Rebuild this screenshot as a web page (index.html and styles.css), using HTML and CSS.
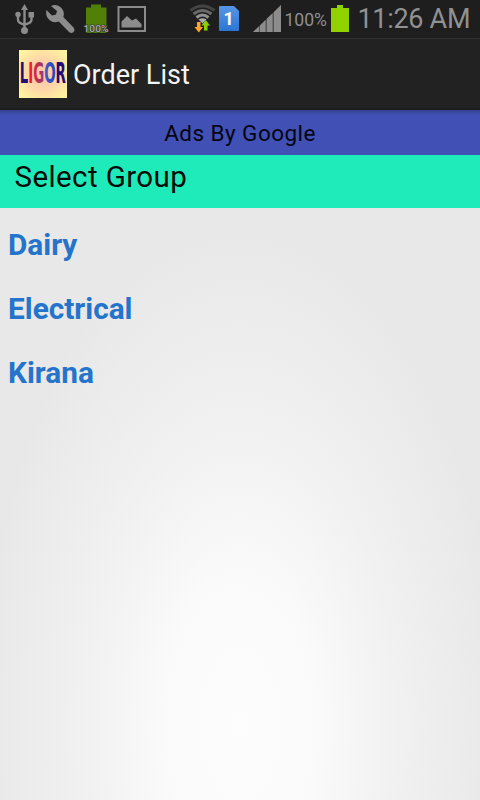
FILE: index.html
```html
<!DOCTYPE html>
<html lang="en">
<head>
<meta charset="utf-8">
<title>Order List</title>
<link rel="stylesheet" href="styles.css">
</head>
<body>
<div class="screen">
  <div class="status">
    <svg class="usb" width="20" height="32" viewBox="15 3 20 32"><g fill="none" stroke="#8c8c8c" stroke-width="2.4"><path d="M24.500 8V31M18 16V20Q18 23 24.500 24.500M31.500 16V20Q31.500 23 24.500 24.500"/></g><g fill="#8c8c8c"><path d="M24.500 4L28 10H21Z"/><circle cx="18" cy="14.500" r="2.700"/><path d="M28.500 12H34V17.500H28.500Z"/><circle cx="24.500" cy="30.500" r="3.500"/></g></svg>
    <svg class="wrench" width="30" height="30" viewBox="45 4 30 30"><path fill="#8c8c8c" d="M51 6Q57 3.500 61.500 8Q65 12 63.300 17L73.500 27.500Q75.500 30 73.500 32Q71.500 34 69 32L58.800 21.500Q53.500 23.500 49.500 20Q45 16 46.500 10L52 15.500L56 14.500L57 11Z"/></svg>
    <svg class="mini-battery" width="28" height="31" viewBox="83 4 28 31"><path fill="#527f08" d="M91 4.500H101V7.500H106.500V33H86V7.500H91Z"/><text x="83.500" y="32" textLength="25" lengthAdjust="spacingAndGlyphs" font-size="9.500" font-weight="500" fill="#aaa" stroke="#333" stroke-width="1.200" paint-order="stroke">100%</text></svg>
    <svg class="picture" width="30" height="28" viewBox="117 5 30 28"><path fill="none" stroke="#8c8c8c" stroke-width="2" d="M118.500 7H145V31H118.500Z"/><path fill="#8c8c8c" d="M121.500 27.500V21.500L127 16L132 20.500L136 18.500L141.500 24V27.500Z"/></svg>
    <svg class="wifi" width="28" height="30" viewBox="189 3 28 30"><g fill="none" stroke-width="3"><path stroke="#444" d="M190.500 10.500Q202.500 1.500 214.500 10.500"/><path stroke="#686868" d="M193.500 14Q202.500 7 211.500 14"/><path stroke="#929292" d="M196.500 17.500Q202.500 12.500 208.500 17.500"/></g><path fill="#aaa" d="M198.500 19.500Q202.500 17 206.500 19.500L202.500 23.500Z"/><path fill="#ffa32b" d="M197 22H200.500V27H203L198.800 32.500L194.500 27H197Z"/><path fill="#8bd000" d="M204 30.500V25.500H201.500L205.700 20L210 25.500H207.500V30.500Z"/></svg>
    <svg class="sim" width="21" height="26" viewBox="219 6 21 26"><defs><linearGradient id="simFill" x2="0" y2="1"><stop stop-color="#5795e5"/><stop offset="1" stop-color="#2b76d3"/></linearGradient></defs><path fill="url(#simFill)" d="M220 6H234L239 11V30Q239 31 238 31H220Q219 31 219 30V7Q219 6 220 6Z"/><text x="223.500" y="25" font-size="18" font-weight="700" fill="#fff">1</text></svg>
    <svg class="signal" width="29" height="28" viewBox="253 5 29 28"><path fill="#555" d="M253 32L281 5V32Z"/><path fill="#8c8c8c" d="M253 32L259 26.500V32ZM260 25.500L265.500 20V32H260ZM267 18.500L272.500 13.500V32H267ZM274 12L281 5V32H274Z"/></svg>
    <svg class="percent" width="43" height="22" viewBox="285 9 43 22"><text x="284.500" y="26" textLength="42.500" lengthAdjust="spacingAndGlyphs" font-size="18.500" fill="#8f8f8f">100%</text></svg>
    <svg class="battery" width="18" height="27" viewBox="331 5 18 27"><path fill="#90d200" d="M337 5H343V8H349V32H331V8H337Z"/></svg>
    <svg class="clock" width="120" height="36" viewBox="356 0 120 36"><text x="357.500" y="28" textLength="113" font-size="27" fill="#919191">11:26 AM</text></svg>
  </div>
  <header class="bar">
    <svg class="logo" width="48" height="48" viewBox="0 0 48 48"><defs><radialGradient id="glow" r=".62"><stop stop-color="#ffc6a8"/><stop offset=".5" stop-color="#fed5a8"/><stop offset="1" stop-color="#fff39f"/></radialGradient><linearGradient id="ink" gradientUnits="userSpaceOnUse" x1="0" y1="0" x2="48" y2="0"><stop stop-color="#201273"/><stop offset=".195" stop-color="#201273"/><stop offset=".195" stop-color="#e91c30"/><stop offset=".3" stop-color="#e02236"/><stop offset=".52" stop-color="#8c3f80"/><stop offset=".52" stop-color="#3e60c9"/><stop offset=".75" stop-color="#3040b5"/><stop offset=".75" stop-color="#240c73"/><stop offset="1" stop-color="#240c73"/></linearGradient></defs><rect width="48" height="48" fill="url(#glow)"/><g transform="translate(0 33) scale(1 2.100)"><text class="logo-text" x="0.700" y="0" font-size="13.400" fill="url(#ink)">LIGOR</text></g></svg>
    <h1 class="title">Order List</h1>
  </header>
  <div class="ads">Ads By Google</div>
  <div class="group">Select Group</div>
  <ul class="list">
    <li>Dairy</li>
    <li>Electrical</li>
    <li>Kirana</li>
  </ul>
</div>
</body>
</html>
```
FILE: styles.css
```css
* { box-sizing: border-box; }
body { margin: 0; font-family: Roboto, sans-serif; }
.screen { display: flex; flex-direction: column; width: 480px; height: 800px; overflow: hidden; }
.screen svg { display: block; flex: none; }
.status { display: flex; align-items: flex-start; height: 38px; padding-left: 15px; background: #1e1e1e; }
.usb { margin-top: 3px; }
.wrench { margin: 4px 0 0 10px; }
.mini-battery { margin: 4px 0 0 8px; }
.picture { margin: 5px 0 0 6px; }
.wifi { margin: 3px 0 0 42px; }
.sim { margin: 6px 0 0 2px; }
.signal { margin: 5px 0 0 13px; }
.percent { margin: 9px 0 0 3px; }
.battery { margin: 5px 0 0 3px; }
.clock { margin: 0 0 0 7px; }
.bar { display: flex; align-items: center; gap: 6px; height: 72px; padding: 0 0 0 19px; background: #222; border-top: 1px solid #303030; border-bottom: 2px solid #1b1e20; }
.logo-text { font-family: "DejaVu Sans", sans-serif; font-weight: 700; }
.title { margin: 0; padding-top: 2px; color: #f3f3f3; font-size: 27px; font-weight: 400; line-height: 48px; }
.ads { height: 45px; background: linear-gradient(#34418f, #4050b5 5px); color: #050510; font-size: 22.5px; line-height: 47px; letter-spacing: .45px; text-align: center; }
.group { height: 53px; padding-left: 14.5px; background: #1eebb9; color: #050b09; font-size: 29.500px; line-height: 44px; letter-spacing: .4px; }
.list { flex: 1; margin: 0; padding: 5px 0 0 8px; list-style: none; background: radial-gradient(ellipse 260px 500px at 240px 517px, #fdfdfd 0, #fafafa 30%, #f1f1f1 60%, #e8e8e8 100%); color: #2474cc; font-size: 29.800px; font-weight: 700; line-height: 64px; }
.list li { height: 64px; }
```
